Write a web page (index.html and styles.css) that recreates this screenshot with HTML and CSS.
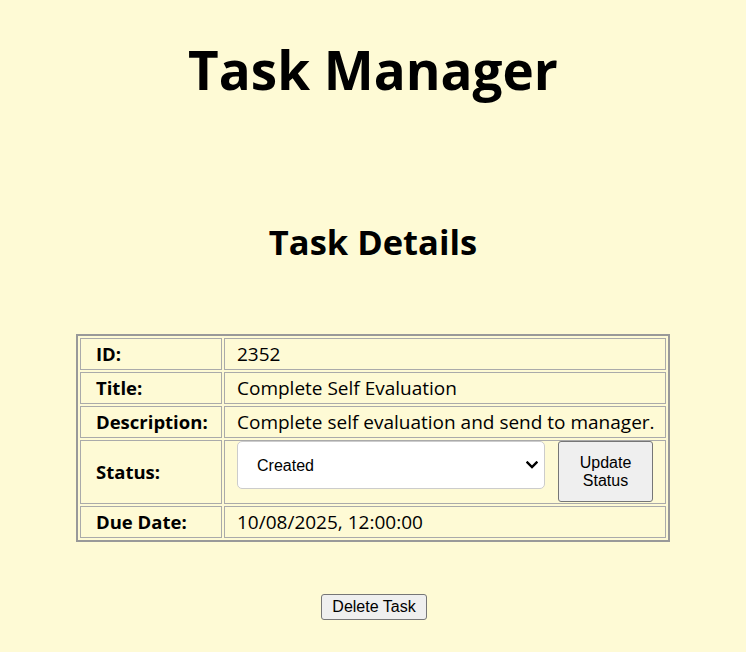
FILE: index.html
```html
<!DOCTYPE html>
<html>
<head>
<meta charset="utf-8">
<link rel="stylesheet" href="styles.css">
</head>
<body>
<h1 class="title">Task Manager</h1>
<h2 class="subtitle">Task Details</h2>
<table class="details">
  <tr><th class="label">ID:</th><td class="value">2352</td></tr>
  <tr><th class="label">Title:</th><td class="value">Complete Self Evaluation</td></tr>
  <tr><th class="label">Description:</th><td class="value">Complete self evaluation and send to manager.</td></tr>
  <tr class="status-row"><th class="label">Status:</th><td class="value">
    <div class="status-controls">
      <select class="status-select">
        <option>Created</option>
        <option>In Progress</option>
        <option>Completed</option>
      </select>
      <button class="update-btn">Update Status</button>
    </div>
  </td></tr>
  <tr><th class="label">Due Date:</th><td class="value">10/08/2025, 12:00:00</td></tr>
</table>
<div class="actions"><button class="delete-btn">Delete Task</button></div>
</body>
</html>
```
FILE: styles.css
```css
html, body {
  background: #fefad5;
}
body {
  margin: 0;
  font-family: "Open Sans", "Noto Sans", sans-serif;
  color: #000;
  text-align: center;
}
.title {
  font-size: 53px;
  line-height: 68px;
  margin: 36px 0 0;
  font-weight: 700;
}
.subtitle {
  font-size: 34.5px;
  line-height: 44px;
  margin: 116px 0 0;
  font-weight: 700;
}
.details {
  margin: 70px auto 0;
  width: 594px;
  border: 2px solid #999;
  border-spacing: 2px;
  font-size: 19px;
  text-align: left;
  table-layout: fixed;
}
.details th, .details td {
  border: 1px solid #aaa;
  height: 30px;
  padding: 0 4px 0 12px;
  line-height: 24px;
  white-space: nowrap;
}
.label {
  width: 121px;
  padding-left: 15px !important;
  font-weight: 700;
  font-size: 18.5px;
}
.status-row th, .status-row td {
  height: 61px;
  padding-top: 0;
  padding-bottom: 1px;
}
.status-controls {
  display: flex;
  align-items: flex-start;
  gap: 13px;
}
.status-select {
  -webkit-appearance: none;
  appearance: none;
  width: 308px;
  height: 48px;
  border: 1px solid #ccc;
  border-radius: 5px;
  background-color: #fff;
  background-image: url("data:image/svg+xml;utf8,<svg xmlns='http://www.w3.org/2000/svg' width='12' height='8' viewBox='0 0 12 8'><path d='M1.5 1.5 L6 6 L10.5 1.5' fill='none' stroke='black' stroke-width='2.4' stroke-linecap='square'/></svg>");
  background-repeat: no-repeat;
  background-position: right 6px center;
  background-size: 12px 8px;
  padding: 0 16px 0 19px;
  font-family: "Liberation Sans", Arial, sans-serif;
  font-size: 16px;
  color: #000;
}
.update-btn {
  width: 95px;
  height: 61px;
  background: #efefef;
  border: 1px solid #767676;
  border-radius: 3px;
  font-family: "Liberation Sans", Arial, sans-serif;
  font-size: 16px;
  color: #000;
  padding: 0 10px;
  white-space: normal;
}
.actions {
  margin-top: 52px;
  padding-left: 2px;
}
.delete-btn {
  font-family: "Liberation Sans", Arial, sans-serif;
  font-size: 16px;
  color: #000;
  background: #efefef;
  border: 1px solid #767676;
  border-radius: 3px;
  padding: 2px 10px;
  width: 106px;
  height: 26px;
}
```
